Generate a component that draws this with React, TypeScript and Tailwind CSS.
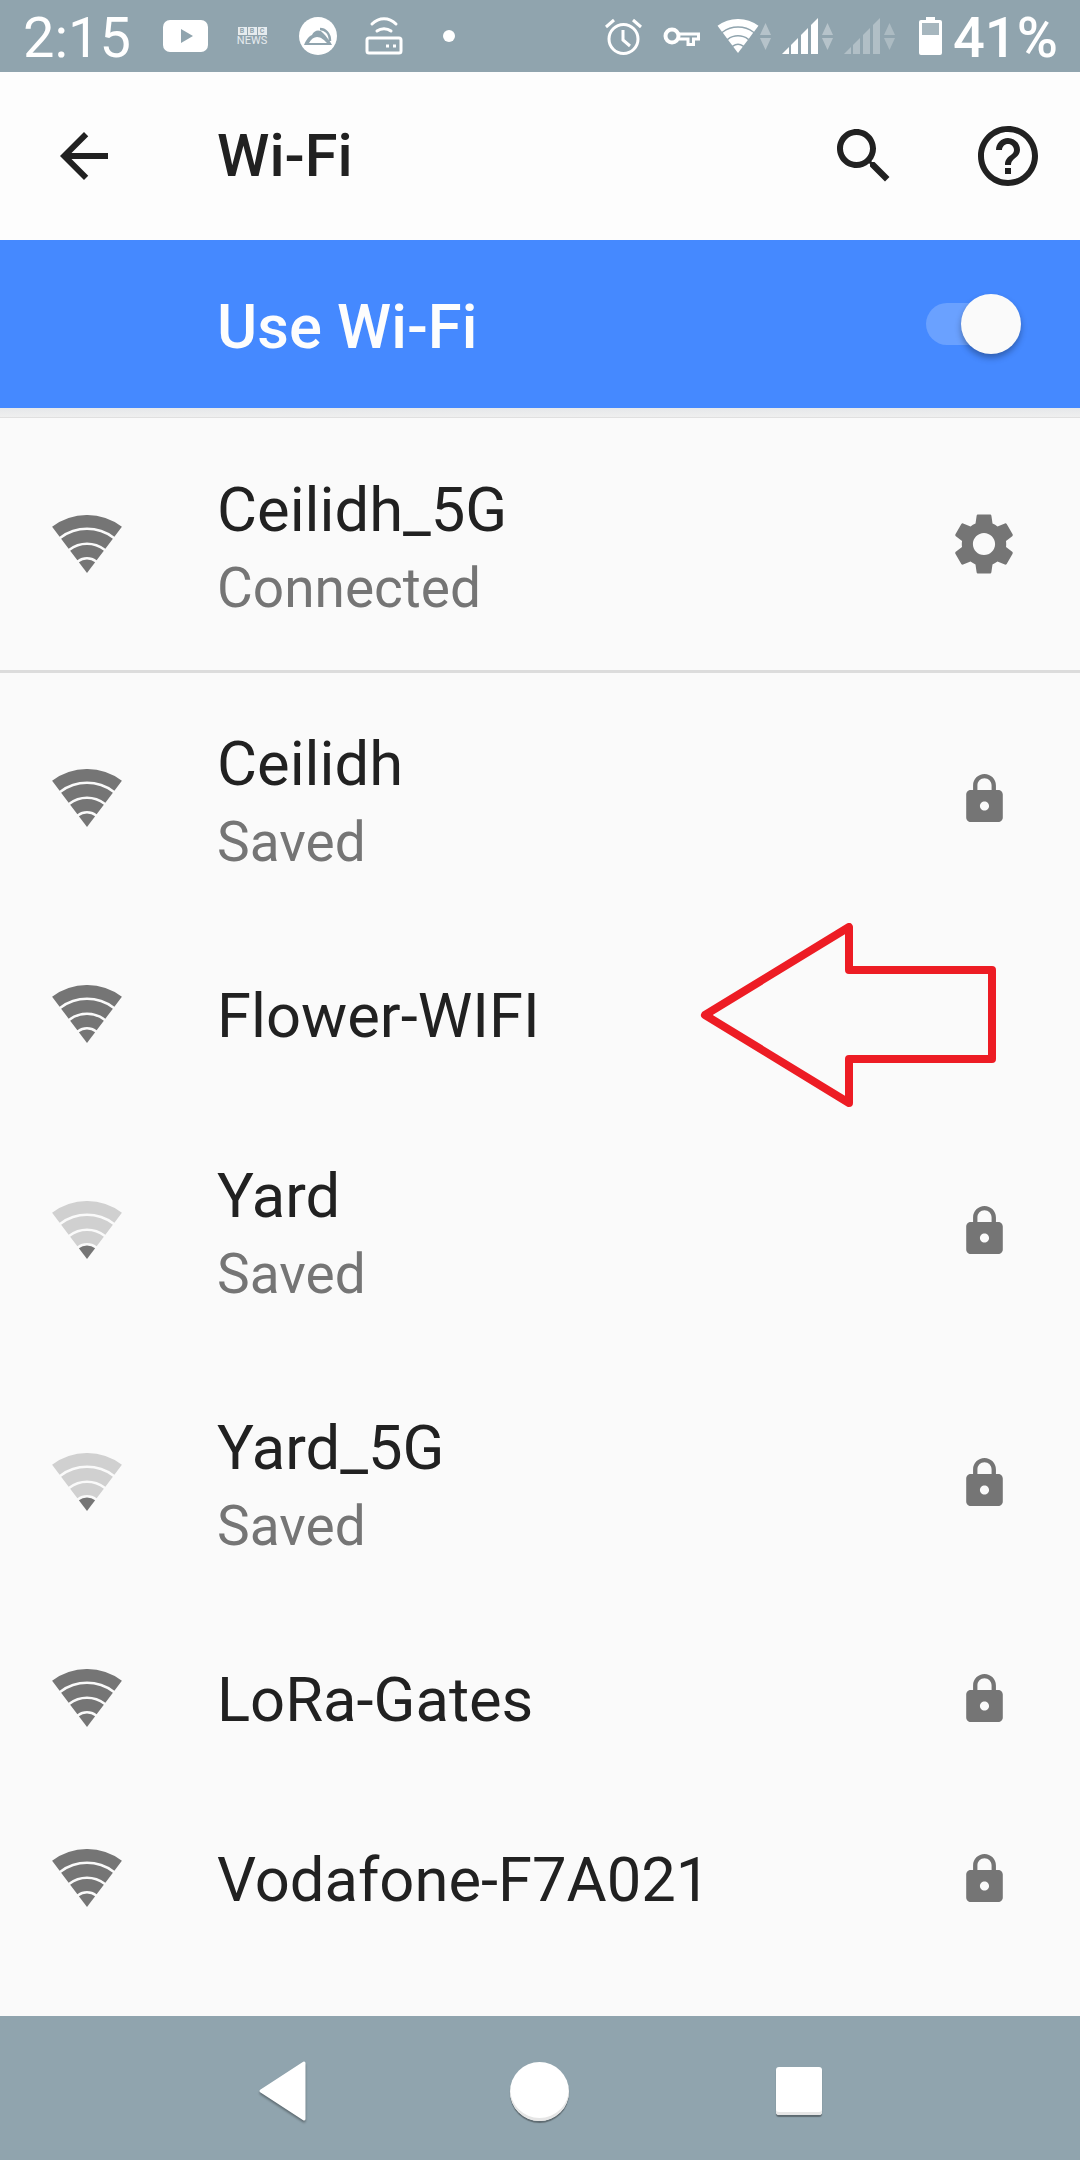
import React from 'react';

const font = { fontFamily: 'Roboto, sans-serif' };

// wedge of the wifi fan, apex at (35,58)
function band(r1: number, r2: number) {
  const a = (37 * Math.PI) / 180;
  const s = Math.sin(a);
  const c = Math.cos(a);
  const pt = (r: number, d: number) => `${(35 + d * r * s).toFixed(2)} ${(58 - r * c).toFixed(2)}`;
  if (r2 === 0) return `M35 58L${pt(r1, -1)}A${r1} ${r1} 0 0 1 ${pt(r1, 1)}Z`;
  return `M${pt(r1, -1)}A${r1} ${r1} 0 0 1 ${pt(r1, 1)}L${pt(r2, 1)}A${r2} ${r2} 0 0 0 ${pt(r2, -1)}Z`;
}

const BANDS: [number, number][] = [
  [13.5, 0],
  [28, 16],
  [43, 30.5],
  [58, 45.5],
];

function WifiFan({ level, on = '#757575', off = '#d0d0d0', className }: { level: number; on?: string; off?: string; className?: string }) {
  return (
    <svg viewBox="0 0 70 58" className={className ?? 'w-[70px] h-[58px] shrink-0'}>
      {BANDS.map((b, i) => (
        <path key={i} d={band(b[0], b[1])} fill={i < level ? on : off} />
      ))}
    </svg>
  );
}

function Arrows({ dim, className }: { dim?: boolean; className?: string }) {
  return (
    <svg viewBox="0 0 11 27" className={`w-[11px] h-[27px] shrink-0 ${className ?? ''}`}>
      <path d="M5.5 0L11 12H0Z" fill="#fff" opacity={dim ? 0.25 : 0.35} />
      <path d="M5.5 27L11 15H0Z" fill="#fff" opacity={dim ? 0.25 : 0.35} />
    </svg>
  );
}

function Signal({ dim, className }: { dim?: boolean; className?: string }) {
  return (
    <svg viewBox="0 0 36 38" className={`w-[36px] h-[38px] shrink-0 ${className ?? ''}`} fill="#fff" opacity={dim ? 0.3 : 1}>
      <path d="M0 37L7 30V37Z" />
      <path d="M9 28L16 21V37H9Z" />
      <path d="M19 18L26 11V37H19Z" />
      <path d="M29 8L36 1V37H29Z" />
    </svg>
  );
}

function StatusBar() {
  return (
    <div className="h-[72px] bg-[#90a4ae] flex items-center text-white pl-[23px] overflow-hidden" style={font}>
      <span className="text-[56px] leading-none w-[140px] shrink-0 mt-[3px]">2:15</span>
      <svg viewBox="0 0 45 32" className="w-[45px] h-[32px] shrink-0">
        <rect width="45" height="32" rx="7" fill="#fff" />
        <path d="M18 9L30 16L18 23Z" fill="#90a4ae" />
      </svg>
      <div className="w-[30px] ml-[29px] shrink-0 flex flex-col items-center text-[#e6ebee] leading-none mt-[1px]">
        <div className="flex gap-[1px]">
          <span className="w-[9px] h-[8px] bg-[#e6ebee] text-[#90a4ae] text-[7px] font-bold leading-[8px] text-center">B</span>
          <span className="w-[9px] h-[8px] bg-[#e6ebee] text-[#90a4ae] text-[7px] font-bold leading-[8px] text-center">B</span>
          <span className="w-[9px] h-[8px] bg-[#e6ebee] text-[#90a4ae] text-[7px] font-bold leading-[8px] text-center">C</span>
        </div>
        <span className="text-[11px] leading-[10px] mt-[1px]">NEWS</span>
      </div>
      <svg viewBox="0 0 38 38" className="w-[38px] h-[38px] ml-[32px] shrink-0">
        <circle cx="19" cy="19" r="19" fill="#fff" />
        <path d="M5 28C7 23 10 19 13 18C15 13 21 12 24 16C27 19 31 24 33 28Z" fill="#90a4ae" />
        <path d="M10 26C12 22 15 20 18 20C22 20 25 23 28 26Z" fill="#fff" />
        <path d="M21 12C26 12 31 16 31 24" stroke="#90a4ae" strokeWidth="2.5" fill="none" />
      </svg>
      <svg viewBox="0 0 38 38" className="w-[38px] h-[38px] ml-[28px] shrink-0" fill="none" stroke="#fff" strokeWidth="3" strokeLinecap="round">
        <path d="M7 7C14 0 24 0 31 7" />
        <path d="M12 14C16 11 22 11 26 14" />
        <rect x="2" y="21" width="34" height="15" rx="2" />
        <path d="M21 29H24M28 29H31" strokeLinecap="butt" />
      </svg>
      <span className="w-[12px] h-[12px] rounded-full bg-white ml-[40px] shrink-0" />
      <svg viewBox="0 0 37 38" className="w-[37px] h-[38px] ml-[150px] shrink-0" fill="none" stroke="#fff" strokeWidth="3">
        <circle cx="18.5" cy="22" r="14.5" />
        <path d="M18 13V23L25 29" />
        <path d="M1 10L9 3M36 10L28 3" />
      </svg>
      <svg viewBox="0 0 37 21" className="w-[37px] h-[21px] ml-[21px] shrink-0" fill="none" stroke="#fff">
        <circle cx="9" cy="10" r="6.5" strokeWidth="4" />
        <path d="M16 8H35.5V13H30.5V18.5H25V13H16" strokeWidth="3" />
      </svg>
      <WifiFan level={4} on="#fff" off="#fff" className="w-[42px] h-[34px] ml-[17px] shrink-0" />
      <Arrows className="ml-[1px]" />
      <Signal className="ml-[11px]" />
      <Arrows className="ml-[4px]" />
      <Signal dim className="ml-[11px]" />
      <Arrows dim className="ml-[4px]" />
      <svg viewBox="0 0 23 38" className="w-[23px] h-[38px] ml-[24px] shrink-0">
        <path d="M7 0H16V3H21A2 2 0 0 1 23 5V36A2 2 0 0 1 21 38H2A2 2 0 0 1 0 36V5A2 2 0 0 1 2 3H7Z" fill="#fff" />
        <rect x="3" y="6" width="17" height="12" fill="#90a4ae" />
        <rect x="3" y="6" width="17" height="12" fill="#fff" fillOpacity="0.2" />
      </svg>
      <span className="text-[56px] font-medium leading-none ml-[11px] shrink-0 mt-[3px]">41%</span>
    </div>
  );
}

function Row({ name, sub, level, icon, tall }: { name: string; sub?: string; level: number; icon?: 'lock' | 'gear'; tall?: boolean }) {
  return (
    <div className={`flex items-center pl-[52px] shrink-0 ${tall ? 'h-[252px]' : 'h-[180px]'}`}>
      <WifiFan level={level} />
      <div className={`ml-[95px] flex-1 ${sub ? 'pt-[9px]' : 'pt-[3px]'}`}>
        <div className="text-[61.5px] leading-[78px] text-[#212121]">{name}</div>
        {sub && <div className="text-[55px] leading-[78px] text-[#757575]">{sub}</div>}
      </div>
      {icon === 'lock' && (
        <svg viewBox="4 1 16 21" className="w-[37px] h-[48px] mr-[77px]" fill="#757575">
          <path d="M18 8h-1V6c0-2.76-2.24-5-5-5S7 3.24 7 6v2H6c-1.1 0-2 .9-2 2v10c0 1.1.9 2 2 2h12c1.1 0 2-.9 2-2V10c0-1.1-.9-2-2-2zm-6 9c-1.1 0-2-.9-2-2s.9-2 2-2 2 .9 2 2-.9 2-2 2zm3.1-9H8.9V6c0-1.71 1.39-3.1 3.1-3.1 1.71 0 3.1 1.39 3.1 3.1v2z" />
        </svg>
      )}
      {icon === 'gear' && (
        <svg viewBox="0 0 24 24" className="w-[74px] h-[74px] mr-[59px]" fill="#757575">
          <path d="M19.14 12.94c.04-.3.06-.61.06-.94 0-.32-.02-.64-.07-.94l2.03-1.58c.18-.14.23-.41.12-.61l-1.92-3.32c-.12-.22-.37-.29-.59-.22l-2.39.96c-.5-.38-1.03-.7-1.62-.94l-.36-2.54c-.04-.24-.24-.41-.48-.41h-3.84c-.24 0-.43.17-.47.41l-.36 2.54c-.59.24-1.13.57-1.62.94l-2.39-.96c-.22-.08-.47 0-.59.22L2.74 8.87c-.12.21-.08.47.12.61l2.03 1.58c-.05.3-.09.63-.09.94s.02.64.07.94l-2.03 1.58c-.18.14-.23.41-.12.61l1.92 3.32c.12.22.37.29.59.22l2.39-.96c.5.38 1.03.7 1.62.94l.36 2.54c.05.24.24.41.48.41h3.84c.24 0 .44-.17.47-.41l.36-2.54c.59-.24 1.13-.56 1.62-.94l2.39.96c.22.08.47 0 .59-.22l1.92-3.32c.12-.22.07-.47-.12-.61l-2.01-1.58zM12 15.6c-1.98 0-3.6-1.62-3.6-3.6s1.62-3.6 3.6-3.6 3.6 1.62 3.6 3.6-1.62 3.6-3.6 3.6z" />
        </svg>
      )}
    </div>
  );
}

export default function App() {
  return (
    <div className="w-[1080px] h-[2160px] flex flex-col bg-[#fafafa] overflow-hidden" style={font}>
      <StatusBar />

      <div className="h-[168px] bg-[#fdfdfd] flex items-center pl-[48px] pr-[36px]">
        <svg viewBox="0 0 24 24" className="w-[72px] h-[72px]" fill="#212121">
          <path d="M20 11H7.83l5.59-5.59L12 4l-8 8 8 8 1.41-1.41L7.83 13H20v-2z" />
        </svg>
        <span className="ml-[97px] flex-1 text-[59.5px] font-medium text-[#212121] pt-[2px]">Wi-Fi</span>
        <svg viewBox="0 0 24 24" className="w-[72px] h-[72px]" fill="#212121">
          <path d="M15.5 14h-.79l-.28-.27C15.41 12.59 16 11.11 16 9.5 16 5.91 13.09 3 9.5 3S3 5.91 3 9.5 5.91 16 9.5 16c1.61 0 3.09-.59 4.23-1.57l.27.28v.79l5 4.99L20.49 19l-4.99-5zm-6 0C7.01 14 5 11.99 5 9.5S7.01 5 9.5 5 14 7.01 14 9.5 11.99 14 9.5 14z" />
        </svg>
        <svg viewBox="0 0 24 24" className="w-[72px] h-[72px] ml-[72px]" fill="#212121">
          <path d="M11 18h2v-2h-2v2zm1-16C6.48 2 2 6.48 2 12s4.48 10 10 10 10-4.48 10-10S17.52 2 12 2zm0 18c-4.41 0-8-3.59-8-8s3.59-8 8-8 8 3.59 8 8-3.59 8-8 8zm0-14c-2.21 0-4 1.79-4 4h2c0-1.1.9-2 2-2s2 .9 2 2c0 2-3 1.75-3 5h2c0-2.25 3-2.5 3-5 0-2.21-1.79-4-4-4z" />
        </svg>
      </div>

      <div className="h-[168px] bg-[#4589ff] flex items-center pl-[217px] pr-[70px]">
        <span className="flex-1 text-[61.5px] font-medium text-[#fdfdfd] pt-[6px]">Use Wi-Fi</span>
        <div className="relative w-[84px] h-[42px] rounded-full bg-[#6aa1ff]">
          <div className="absolute right-[-11px] top-[-9px] w-[60px] h-[60px] rounded-full bg-[#fafafa] shadow-[0_4px_6px_rgba(0,0,0,0.3)]" />
        </div>
      </div>

      <div className="h-[10px] bg-gradient-to-b from-[#e6e8ea] to-[#efefef] border-b border-[#e0e0e0]" />

      <div className="h-[255px] mb-[-1px] flex flex-col justify-end border-b-[3px] border-[#dcdcdc]">
        <Row name="Ceilidh_5G" sub="Connected" level={4} icon="gear" tall />
      </div>

      <Row name="Ceilidh" sub="Saved" level={4} icon="lock" tall />
      <div className="relative">
        <Row name="Flower-WIFI" level={4} />
        <svg viewBox="0 0 300 190" className="absolute left-[700px] top-[-1px] w-[300px] h-[190px]">
          <path d="M5 92L149 4V47H292V136H149V180Z" fill="none" stroke="#ed1c24" strokeWidth="8" strokeLinejoin="round" />
        </svg>
      </div>
      <Row name="Yard" sub="Saved" level={1} icon="lock" tall />
      <Row name="Yard_5G" sub="Saved" level={1} icon="lock" tall />
      <Row name="LoRa-Gates" level={4} icon="lock" />
      <Row name="Vodafone-F7A021" level={4} icon="lock" />

      <div className="mt-auto h-[144px] bg-[#90a4ae] flex items-center pl-[259px] pt-[6px]">
        <svg viewBox="0 0 47 60" className="w-[47px] h-[60px] shrink-0 drop-shadow-[0_2px_1px_rgba(0,0,0,0.35)]">
          <path d="M45 2V58L2 30Z" fill="#fff" stroke="#fff" strokeWidth="3" strokeLinejoin="round" />
        </svg>
        <div className="ml-[204px] w-[59px] h-[59px] rounded-full bg-white shadow-[0_2px_1px_rgba(0,0,0,0.35),inset_0_-3px_0_#e6e6e6]" />
        <div className="ml-[207px] w-[46px] h-[48px] rounded-[3px] bg-white shadow-[0_2px_1px_rgba(0,0,0,0.35),inset_0_-3px_0_#e6e6e6]" />
      </div>
    </div>
  );
}
